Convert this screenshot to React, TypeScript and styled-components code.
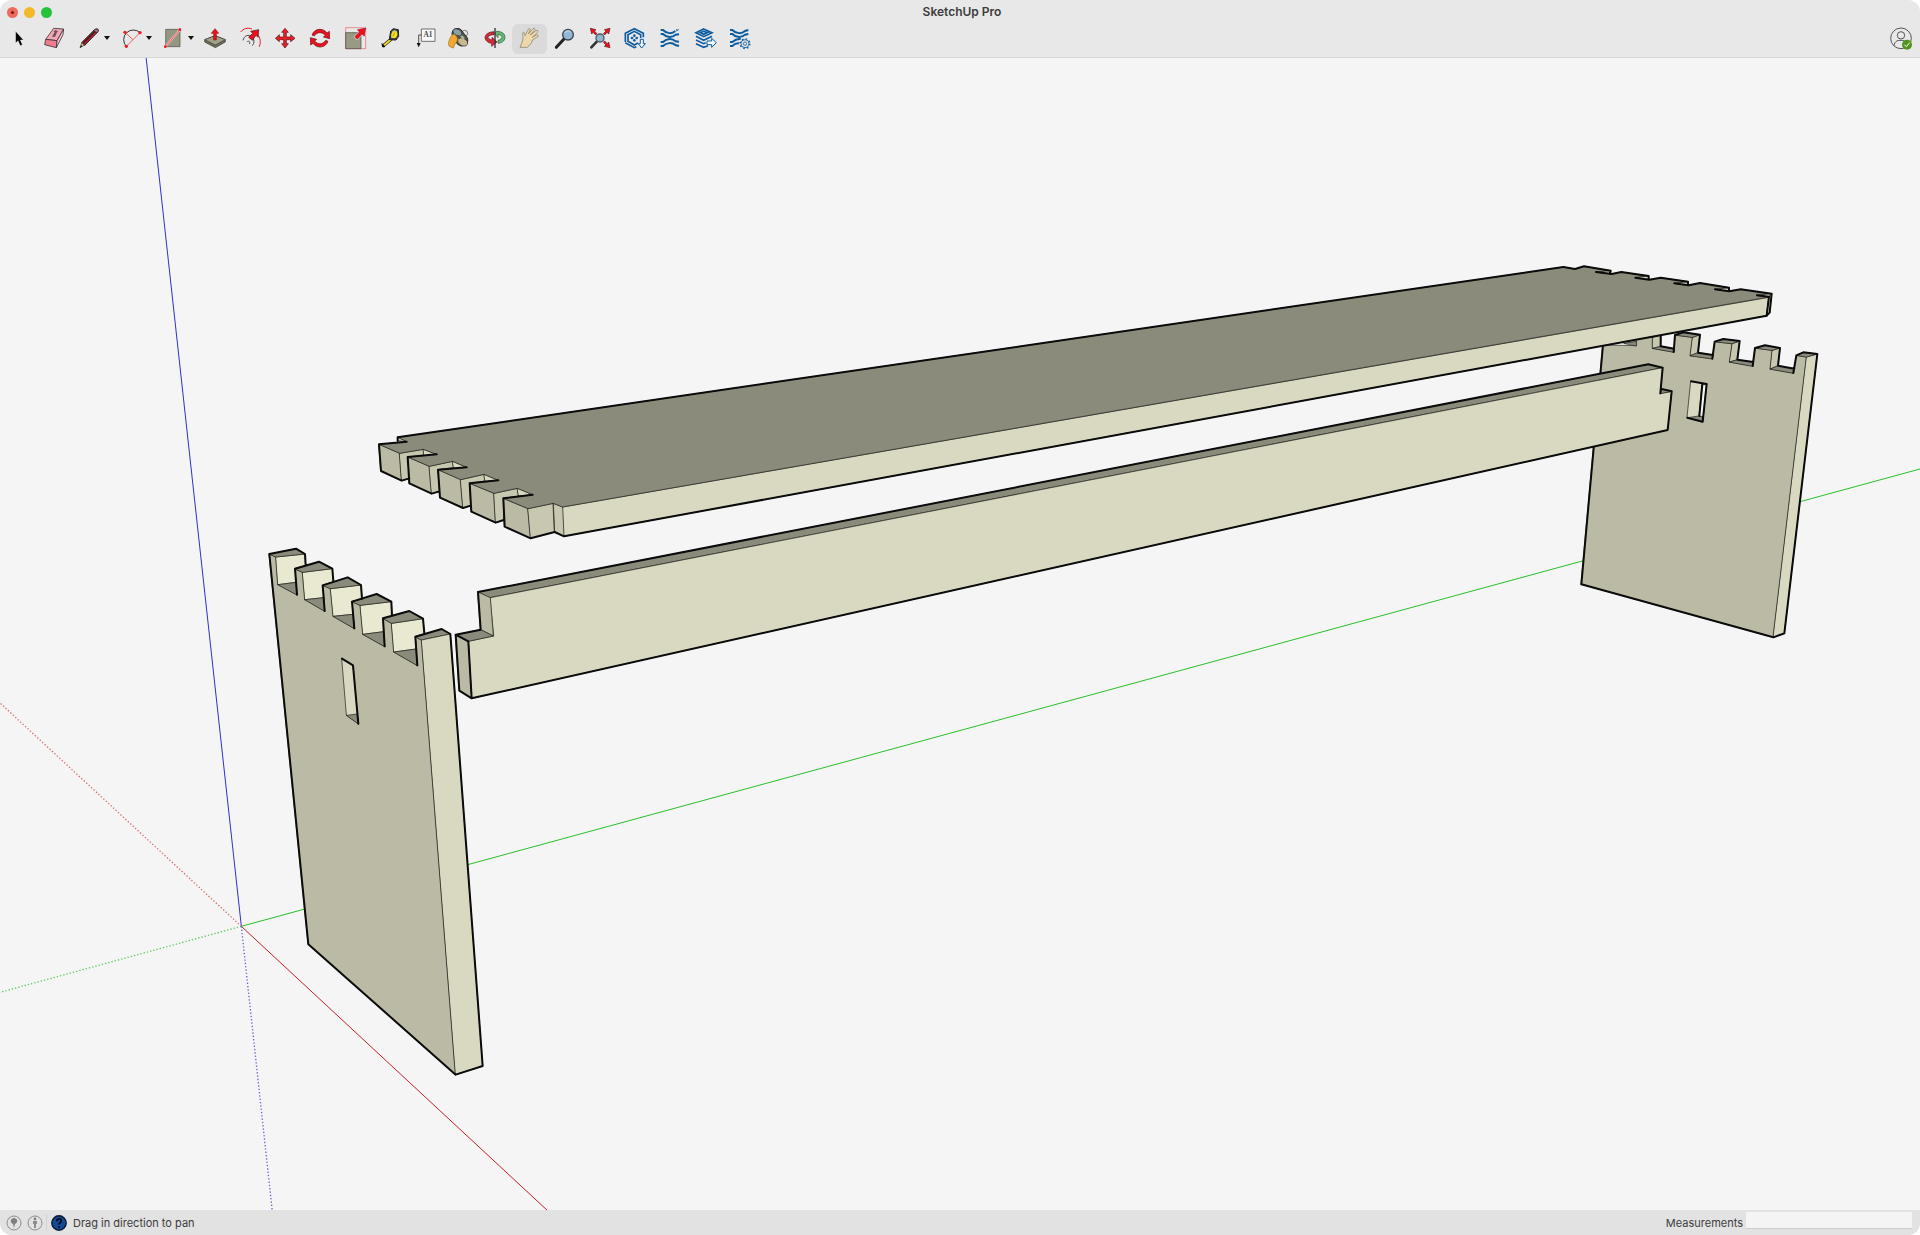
import React from "react";
import styled, { createGlobalStyle } from "styled-components";

const GlobalStyle = createGlobalStyle`
  * { box-sizing: border-box; }
  html, body { margin: 0; background: #ffffff; }
  body { font-family: Inter, "Liberation Sans", sans-serif; color: #3c3c3c; }
`;

const Window = styled.div`
  display: flex;
  flex-direction: column;
  height: 100vh;
  border-radius: 12px;
  overflow: hidden;
  background: #f5f5f5;
`;

const Header = styled.header`
  background: #e8e8e8;
  border-bottom: 1px solid #d6d6d6;
`;

const TitleBar = styled.div`
  display: grid;
  grid-template-columns: 1fr auto 1fr;
  align-items: center;
  height: 24px;
  padding: 0 3px 0 7px;
`;

const Title = styled.h1`
  margin: 0;
  font-size: 12px;
  line-height: 16px;
  font-weight: 600;
`;

const WindowControls = styled.div`
  display: flex;
  gap: 6px;
`;

const WindowButton = styled.button<{ $color: string }>`
  display: grid;
  place-items: center;
  width: 11px;
  height: 11px;
  padding: 0;
  border: 0;
  border-radius: 50%;
  background: ${(p) => p.$color};
`;

const EditedDot = styled.span`
  width: 3px;
  height: 3px;
  border-radius: 50%;
  background: #7c1512;
`;

const ToolBar = styled.div`
  display: flex;
  align-items: flex-start;
  height: 33px;
  padding: 0 7px 0 1px;
`;

const ToolButton = styled.button<{ $active?: boolean }>`
  display: grid;
  place-items: center;
  width: 35px;
  height: 30px;
  padding: 0 0 2px;
  border: 0;
  border-radius: 6px;
  background: ${(p) => (p.$active ? "#dadada" : "transparent")};
`;

const SplitTool = styled.div`
  display: flex;
  padding-left: 4px;
`;

const SplitButton = styled(ToolButton)`
  width: 26px;
`;

const CaretButton = styled(ToolButton)`
  width: 12px;
`;

const AccountButton = styled(ToolButton)`
  width: 24px;
  margin-left: auto;
`;

const Icon = styled.svg<{ $size?: number }>`
  display: block;
  width: ${(p) => p.$size ?? 24}px;
  height: ${(p) => p.$size ?? 24}px;
`;

const Caret = styled.svg`
  display: block;
  width: 6px;
  height: 4px;
`;

const Canvas = styled.main`
  flex: 1;
  min-height: 0;
`;

const Scene = styled.svg`
  display: block;
  width: 100%;
  height: 100%;
  stroke-linejoin: round;
  stroke-linecap: round;

  .top { fill: #8a8b7b; }
  .front { fill: #bbbba5; }
  .mid { fill: #c8c8b0; }
  .side { fill: #d9d9c1; }
  .lit { fill: #e9e9d1; }
  .gap { fill: #f5f5f5; }
  .face { stroke: #1c1c18; stroke-width: 2; }
  .edge { fill: none; stroke: #0b0b0b; stroke-width: 6; }
  .axis { fill: none; stroke-width: 3; }
  .dots { fill: none; stroke-width: 4; stroke-linecap: butt; stroke-dasharray: 4 6; }
`;

const StatusBar = styled.footer`
  display: flex;
  align-items: center;
  height: 25px;
  padding: 0 8px 0 6px;
  background: #e2e2e2;
  font-size: 11px;
  line-height: 16px;
`;

const StatusIcons = styled.div`
  display: flex;
  gap: 5px;
  margin-right: 3px;
`;

const StatusButton = styled.button`
  padding: 0;
  border: 0;
  background: transparent;
`;

const Divider = styled.span`
  width: 1px;
  height: 17px;
  margin-right: 4px;
  background: #d2d2d2;
`;

const Hint = styled.span`
  margin-left: 6px;
`;

const Measurements = styled.label`
  display: flex;
  align-items: center;
  gap: 3px;
  height: 25px;
  margin-left: auto;
`;

const MeasureInput = styled.input`
  align-self: flex-start;
  width: 166px;
  height: 17px;
  margin-top: 2px;
  padding: 0 4px;
  border: 0;
  border-bottom: 1px solid #cccccc;
  background: #f4f4f4;
  font: inherit;
`;

const BLUE = "#0d5c9e";
const RED = "#f0101c";

const ArrowIcon = () => (
  <Icon viewBox="0 0 72 72"><path d="M26 16V51L33 44 40 59 46 56 40 42H49Z" fill="#000" stroke="#fff" strokeWidth="1" /></Icon>
);
const EraserIcon = () => (
  <Icon viewBox="0 0 72 72">
    <g stroke="#333" strokeWidth="2.4" strokeLinejoin="round">
      <path d="M35 7 65 9 45 44 11 40Z" fill="#f4a6b5" />
      <path d="M11 40 45 44 43 65 8 56Z" fill="#ee7d90" />
      <path d="M45 44 65 9 63 26 43 65Z" fill="#f7c3cc" />
    </g>
    <path d="M41 12 49 17 45 19 39 33 30 32 38 18 34 18Z" fill="#66555a" />
  </Icon>
);
const PencilIcon = () => (
  <Icon viewBox="0 0 72 72">
    <path d="M12 65 18 49 26 57Z" fill="#e3c998" stroke="#222" strokeWidth="2" />
    <path d="M18 49 55 12 64 19 26 58Z" fill="#c81d26" stroke="#1a1a1a" strokeWidth="3" />
    <path d="M23 50 58 15" stroke="#222" strokeWidth="4" />
    <path d="M53 14C57 9 62 7 66 10S66 17 62 21Z" fill="#b66a72" stroke="#222" strokeWidth="3" />
    <path d="M12 65 15 58 19 61Z" fill="#111" />
  </Icon>
);
const ArcIcon = () => (
  <Icon viewBox="0 0 72 72">
    <path d="M25 61A29 29 0 0 1 66 20" fill="none" stroke="#333" strokeWidth="3" />
    <path d="M25 61 66 20M21 19 45 41" stroke="#f05a62" strokeWidth="3" />
    <g fill="#f01822"><circle cx="25" cy="61" r="5" /><circle cx="66" cy="20" r="5" /><circle cx="21" cy="19" r="5" /></g>
  </Icon>
);
const RectangleIcon = () => (
  <Icon viewBox="0 0 72 72">
    <path d="M17 10H60V62H17Z" fill="#969780" stroke="#4b4b42" strokeWidth="2" />
    <path d="M16 62 60 11" stroke="#f7c9c9" strokeWidth="6" /><path d="M16 62 60 11" stroke="#f3545e" strokeWidth="3" />
    <circle cx="16" cy="62" r="4" fill={RED} /><circle cx="60" cy="11" r="4" fill={RED} />
  </Icon>
);
const PushPullIcon = () => (
  <Icon viewBox="0 0 72 72">
    <path d="M5 41 36 29 67 41V48L37 65 5 48Z" fill="#6c6d5c" stroke="#3c3c34" strokeWidth="2" />
    <path d="M5 41 36 29 67 41 37 57Z" fill="#a0a189" stroke="#3c3c34" strokeWidth="2" />
    <path d="M36 8 47 22H40V42H32V22H25Z" fill={RED} stroke="#8d1519" strokeWidth="2" />
  </Icon>
);
const OffsetIcon = () => (
  <Icon viewBox="0 0 72 72">
    <path d="M8 18C17 7 29 4 42 9M51 18C66 29 70 45 64 62" fill="none" stroke={RED} strokeWidth="3" />
    <path d="M15 43C18 29 32 23 42 33 49 40 50 50 43 59M27 48C32 42 38 48 34 54" fill="none" stroke="#444" strokeWidth="3" />
    <path d="M32 34 44 22 38 16 62 11 60 34 54 28 43 43Z" fill={RED} stroke="#3b1414" strokeWidth="2" />
  </Icon>
);
const MoveIcon = () => (
  <Icon viewBox="0 0 72 72">
    <path d="M36 7 46 19H40V33H53V26L66 37 53 47V41H40V53H46L36 66 26 53H32V41H19V47L7 37 19 26V33H32V19H26Z" fill="#ee1c25" stroke="#4d1416" strokeWidth="2" />
  </Icon>
);
const RotateIcon = () => (
  <Icon viewBox="0 0 72 72">
    <g fill={RED} stroke="#5e1518" strokeWidth="2">
      <path d="M12 27C19 7 45 4 57 21L64 16 65 38 46 33 52 28C43 17 27 17 19 30Z" />
      <path d="M60 46C53 66 27 69 15 52L8 57 7 35 26 40 20 45C29 56 45 56 53 43Z" />
    </g>
  </Icon>
);
const ScaleIcon = () => (
  <Icon viewBox="0 0 72 72">
    <path d="M8 5H68V68H8Z" fill="none" stroke="#ee5960" strokeWidth="2" />
    <path d="M8 20H54V68H8Z" fill="#999a84" stroke="#44443c" strokeWidth="2" />
    <path d="M35 32 49 18 43 11 69 5 64 31 57 25 43 40Z" fill={RED} stroke="#fff" strokeWidth="4" /><path d="M35 32 49 18 43 11 69 5 64 31 57 25 43 40Z" fill={RED} stroke="#70191c" strokeWidth="1.5" />
  </Icon>
);
const TapeIcon = () => (
  <Icon viewBox="0 0 72 72">
    <path d="M40 39 15 60" stroke="#222" strokeWidth="10" /><path d="M40 39 18 58" stroke="#f2dc20" strokeWidth="6" />
    <path d="M12 53 20 62 14 63Z" fill="#111" stroke="#111" strokeWidth="3" />
    <path d="M38 15 46 8 61 11 62 31 54 42 34 41Z" fill="#3a3a3a" stroke="#222" strokeWidth="3" strokeLinejoin="round" />
    <path d="M42 16 49 12 57 15 57 29 50 36 39 36Z" fill="#aaa" />
    <ellipse cx="49" cy="26" rx="9" ry="11" fill="#f3df19" transform="rotate(20 49 26)" />
    <path d="m50 20-5 11" stroke="#8c861c" strokeWidth="2" />
  </Icon>
);
const TextIcon = () => (
  <Icon viewBox="0 0 72 72">
    <path d="M25 9H66V46H25Z" fill="#f8f8f8" stroke="#555" strokeWidth="2.5" />
    <path d="M25 27H17V54" fill="none" stroke="#333" strokeWidth="2.5" /><path d="M11 51H23L17 64Z" fill="#111" />
    <text x="45" y="34" textAnchor="middle" fontFamily="Liberation Serif, serif" fontSize="22" fontWeight="700" fill="#444">A1</text>
  </Icon>
);
const PaintIcon = () => (
  <Icon viewBox="0 0 72 72">
    <circle cx="50" cy="22" r="9" fill="none" stroke="#777" strokeWidth="3" />
    <path d="M12 24C12 8 28 4 38 10L58 36C63 49 54 59 40 60 25 57 15 39 12 24Z" fill="#555648" stroke="#292a25" strokeWidth="3" />
    <ellipse cx="28" cy="19" rx="14" ry="9" fill="#8aa2a7" stroke="#333" strokeWidth="2" transform="rotate(25 28 19)" />
    <ellipse cx="44" cy="48" rx="16" ry="11" fill="#c7b98d" stroke="#333" strokeWidth="2" transform="rotate(28 44 48)" />
    <path d="M19 24C28 31 32 41 24 50 20 55 18 59 17 66 9 65 2 60 1 56 3 40 8 27 19 24Z" fill="#f3a72d" stroke="#9e722c" strokeWidth="2" />
    <path d="m39 30 9 8" stroke="#b3b5a2" strokeWidth="7" />
  </Icon>
);
const OrbitIcon = () => (
  <Icon viewBox="0 0 72 72">
    <path d="M33 17C15 18 6 25 6 36 8 46 17 51 26 52V61L42 48 27 34V42C19 40 15 37 15 32 19 28 25 26 33 26Z" fill="#d62a36" stroke="#561b1e" strokeWidth="2" />
    <path d="M40 16C58 16 66 24 66 34 65 47 55 51 45 52V43C53 41 57 38 57 32 54 28 48 25 45 25V35L34 22 40 17Z" fill="#64b875" stroke="#285a32" strokeWidth="2" />
    <path d="M36 6V66" stroke="#333" strokeWidth="4" />
  </Icon>
);
const HandIcon = () => (
  <Icon viewBox="0 0 72 72">
    <path d="M6 64C10 54 14 47 15 37L14 21C17 16 20 19 21 29L31 10C35 6 39 8 36 14L31 24 45 8C50 5 53 8 49 13L37 27 54 14C60 11 62 16 58 20L43 34 55 27C62 25 63 30 57 34L43 42C42 52 35 57 28 64Z" fill="#ecd8ab" stroke="#807962" strokeWidth="2" strokeLinejoin="round" />
  </Icon>
);
const ZoomIcon = () => (
  <Icon viewBox="0 0 72 72">
    <path d="M10 64 33 39" stroke="#222" strokeWidth="9" strokeLinecap="round" />
    <circle cx="45" cy="26" r="16" fill="#93b7d6" stroke="#39434c" strokeWidth="4" /><path d="M36 21C41 12 50 14 53 19" fill="none" stroke="#bbd2e5" strokeWidth="4" />
  </Icon>
);
const ZoomExtentsIcon = () => (
  <Icon viewBox="0 0 72 72">
    <path d="M10 64 27 46" stroke="#333" strokeWidth="8" strokeLinecap="round" />
    <g fill={RED} stroke="#611317" strokeWidth="2"><path d="M7 7 24 11 19 15 27 23 23 27 15 19 11 24Z" /><path d="M66 7 49 11 54 15 46 23 50 27 58 19 62 24Z" /><path d="M66 65 49 61 54 57 46 49 50 45 58 53 62 48Z" /></g>
    <circle cx="36" cy="36" r="12" fill="#93b5d0" stroke="#4f5b62" strokeWidth="4" />
  </Icon>
);
const WarehouseIcon = () => (
  <Icon viewBox="0 0 72 72" fill="none" stroke={BLUE} strokeWidth="5">
    <path d="M7 48V22L34 8 61 22V34M7 50 34 65 40 62" />
    <path d="M45 51 34 57 15 46V26L34 16 53 26V36" />
    <g fill={BLUE} stroke="none"><circle cx="34" cy="29" r="4" /><circle cx="27" cy="36" r="4" /><circle cx="41" cy="36" r="4" /><circle cx="34" cy="43" r="4" /></g>
    <path d="M52 40H61V53H67L56 66 46 53H52Z" fill="#f4f8fb" strokeWidth="3" />
  </Icon>
);
const ExtensionIcon = () => (
  <Icon viewBox="0 0 72 72" fill="none" stroke={BLUE} strokeWidth="6">
    <path d="M8 12H15C26 24 43 24 52 15M8 24H15C27 36 43 36 53 26L63 25M8 48H15C27 36 43 36 53 46L63 47M8 60H15C26 49 43 49 52 57L63 60" />
    <path d="M55 13 63 11" strokeDasharray="4 3" />
  </Icon>
);
const ShareIcon = () => (
  <Icon viewBox="0 0 72 72" fill="none" stroke={BLUE} strokeWidth="5">
    <path d="M32 9 57 20 32 32 9 20ZM22 20 32 16 43 20 32 25Z" />
    <path d="M9 31 32 43 57 31M9 42 32 53 38 50M9 53 32 64 45 59" />
    <path d="M42 45H56V37L70 50 56 64V56H42Z" fill="#f4f8fb" strokeWidth="3" />
  </Icon>
);
const ManagerIcon = () => (
  <Icon viewBox="0 0 72 72" fill="none" stroke={BLUE} strokeWidth="6">
    <path d="M6 12H13C24 24 41 24 51 15L61 12M6 24H13C25 36 41 36 51 26L61 24M6 48H13C22 40 31 38 38 39M6 60H13C20 53 27 51 34 52" />
    <circle cx="51" cy="53" r="16" fill="#e8e8e8" stroke="none" />
    <circle cx="51" cy="53" r="12" strokeWidth="2.5" /><circle cx="51" cy="53" r="14.5" strokeWidth="4" strokeDasharray="5 6.4" /><circle cx="51" cy="53" r="5" strokeWidth="2.5" />
  </Icon>
);
const AccountIcon = () => (
  <Icon viewBox="0 0 72 72" fill="none" stroke="#555" strokeWidth="3">
    <circle cx="36" cy="37" r="31" /><circle cx="36" cy="28" r="11" /><path d="M15 59C18 43 28 43 36 43S48 45 52 50" />
    <circle cx="54" cy="56" r="15" fill="#559321" stroke="none" /><path d="m46 56 6 6 10-12" stroke="#fff" />
  </Icon>
);

const DropCaret = () => (
  <Caret viewBox="0 0 6 4"><path d="M0 0H6L3 4Z" fill="#111" /></Caret>
);

type Tool = { name: string; icon: React.FC; menu?: boolean; active?: boolean };

const tools: Tool[] = [
  { name: "Select", icon: ArrowIcon },
  { name: "Eraser", icon: EraserIcon },
  { name: "Line", icon: PencilIcon, menu: true },
  { name: "Arc", icon: ArcIcon, menu: true },
  { name: "Rectangle", icon: RectangleIcon, menu: true },
  { name: "Push/Pull", icon: PushPullIcon },
  { name: "Offset", icon: OffsetIcon },
  { name: "Move", icon: MoveIcon },
  { name: "Rotate", icon: RotateIcon },
  { name: "Scale", icon: ScaleIcon },
  { name: "Tape Measure", icon: TapeIcon },
  { name: "Text", icon: TextIcon },
  { name: "Paint Bucket", icon: PaintIcon },
  { name: "Orbit", icon: OrbitIcon },
  { name: "Pan", icon: HandIcon, active: true },
  { name: "Zoom", icon: ZoomIcon },
  { name: "Zoom Extents", icon: ZoomExtentsIcon },
  { name: "3D Warehouse", icon: WarehouseIcon },
  { name: "Extension Warehouse", icon: ExtensionIcon },
  { name: "Share Model", icon: ShareIcon },
  { name: "Extension Manager", icon: ManagerIcon },
];

const ToolItem = ({ name, icon: Glyph, menu, active }: Tool) =>
  menu ? (
    <SplitTool>
      <SplitButton aria-label={name}><Glyph /></SplitButton>
      <CaretButton aria-label={`${name} options`}><DropCaret /></CaretButton>
    </SplitTool>
  ) : (
    <ToolButton aria-label={name} aria-pressed={active} $active={active}><Glyph /></ToolButton>
  );

const Axes = () => (
  <g>
    <path className="axis" d="M724 2779 438 170" stroke="#2f2fcc" />
    <path className="axis" d="M724 2779 5760 1407" stroke="#2abf2a" />
    <path className="axis" d="M724 2779 1645 3634" stroke="#c4202a" />
    <path className="dots" d="M724 2779 0 2109" stroke="#d96a6a" />
    <path className="dots" d="M724 2779 0 2977" stroke="#5ccc5c" />
    <path className="dots" d="M724 2779 817 3634" stroke="#6464d6" />
  </g>
);

const RightLeg = () => (
  <g transform="translate(4620 750)">
    <path className="front face" d="M189 285 289 287V262H338V295L402 306 405 255 458 262 451 317 517 326 524 275 577 281 569 336 638 348 645 294 697 301 691 357 760 369 769 316 800 321 700 1162 124 1003Z" />
    <path className="side face" d="M800 321 832 312 733 1150 700 1162Z" />
    <path className="mid face" d="M338 262 364 255 362 289 338 295ZM458 262 480 254 474 308 451 317ZM577 281 599 273 592 329 569 336ZM697 301 720 294 714 347 691 357Z" />
    <path className="top face" d="M252 280 289 274V287ZM338 295 362 289 402 296V306ZM451 317 474 308 519 315 517 326ZM569 336 592 329 640 336 638 348ZM691 357 714 347 763 356 760 369Z" />
    <path className="top face" d="M405 255 430 247 480 254 458 262ZM524 275 550 267 599 273 577 281ZM645 294 675 286 720 294 697 301ZM769 316 790 307 832 312 800 321Z" />
    <path className="side face" d="M453 394 500 402 488 515 442 503Z" />
    <path className="gap face" d="M487 403 499 405 490 500 478 498Z" />
    <path className="top face" d="M442 503 476 498 490 502 488 515Z" />
    <path className="edge" d="M453 394 500 402 488 515 442 503M487 403 478 498" />
    <path className="edge" d="M189 285 124 1003 700 1162 733 1150 832 312 790 307 769 316 760 369M763 356 714 347 720 294 675 286 645 294 638 348M640 336 592 329 599 273 550 267 524 275 517 326M519 315 474 308 480 254 430 247 405 255 401 306M402 296 362 289V260" />
  </g>
);

const Beam = () => (
  <g transform="translate(750 1605)">
    <path className="top face" d="M684 171 4195 -512 4238 -502 721 188Z" />
    <path className="side face" d="M721 188 4238 -502 4231 -425 4265 -431 4253 -315 665 490 655 319 730 303Z" />
    <path className="front face" d="M617 299 655 319 665 490 628 467ZM684 171 721 188 730 303 692 284Z" />
    <path className="top face" d="M617 299 692 284 730 303 655 319ZM4231 -425 4235 -438 4265 -431Z" />
    <path className="edge" d="M617 299 692 284 684 171 4195 -512 4238 -502 4231 -425M4235 -438 4265 -431 4253 -315 665 490 628 467 617 299 655 319 665 490" />
  </g>
);

const SeatRightEnd = () => (
  <g transform="translate(4620 750)">
    <path className="side face" d="M168 66 212 62V70ZM286 83 326 78V88ZM403 100 444 95V105ZM525 118 567 113V123ZM651 136 692 131 687 141Z" />
    <path className="edge" d="M70 51 105 57 132 49 212 62 210 70M168 66 215 72 244 66 326 78V87M286 83 328 89 362 83 444 95V104M403 100 446 106 480 99 567 113V122M525 118 568 124 602 118 695 131 689 188 680 197M651 136 687 140 680 197" />
  </g>
);

const Seat = () => (
  <>
    <g transform="translate(1080 1260)">
      <path className="side face" d="M608 261 4227 -368 4220 -313 612 349Z" />
      <path className="side face" d="M4227 -371 4235 -379 4229 -322 4220 -313Z" />
      <path className="front face" d="M57 73 119 100 125 182 63 153ZM143 111 208 139 215 221 148 190ZM234 149 302 179 309 264 240 233ZM329 190 402 220 407 308 334 275ZM430 235 504 266 512 355 434 320Z" />
      <path className="mid face" d="M119 100 190 88 192 107 143 111 148 175 125 182ZM208 139 278 124 281 143 234 149 238 214 215 221ZM302 179 372 163 376 183 329 190 332 257 309 264ZM402 220 472 205 476 228 430 235 431 300 407 308ZM504 266 580 250 584 336 512 355ZM580 250 608 261 612 349 584 336Z" />
      <path className="side face" d="M190 88 230 103 192 107ZM278 124 320 142 281 145ZM372 163 415 181 376 184ZM472 205 518 224 476 228ZM113 52V62L140 65Z" />
      <path className="top face" d="M113 52 3610 -459 3645 -453 3672 -461 3752 -448 3708 -444 3755 -438 3784 -444 3866 -432 3826 -427 3868 -421 3902 -427 3984 -415 3943 -410 3986 -404 4020 -411 4107 -397 4065 -392 4108 -386 4142 -392 4232 -379 4191 -374 4227 -369 608 261 580 250 504 266 430 235 518 224 472 205 402 220 329 190 415 181 372 163 302 179 234 149 320 142 278 124 208 139 143 111 230 103 190 88 119 100 57 73 140 65Z" />
      <path className="edge" d="M3610 -459 113 52V62M140 65 57 73 63 153 125 182 148 175M230 103 143 111 148 190 215 221 238 214M320 142 234 149 240 233 309 264 332 257M415 181 329 190 334 275 407 308 431 300M518 224 430 235 434 320 512 355 584 336 612 349 4220 -313" />
    </g>
    <SeatRightEnd />
  </>
);

const LeftLeg = () => (
  <g transform="translate(750 1605)">
    <path className="front face" d="M58 57 78 66 84 149 141 179 135 102 158 112 165 194 224 228 218 151 242 161 250 244 313 280 306 200 331 211 339 298 404 334 399 250 425 265 432 351 502 391 496 305 515 315 617 1619 175 1228Z" />
    <path className="lit face" d="M78 66 165 57 167 92 135 100 138 142 84 149ZM158 112 247 101 250 140 218 150 222 188 165 194ZM242 161 333 150 336 192 306 199 309 238 250 244ZM331 211 424 200 426 243 399 250 401 290 339 298ZM425 265 519 251 523 296 496 304 498 342 432 351Z" />
    <path className="top face" d="M84 149 138 142 141 179ZM165 194 222 188 224 228ZM250 244 309 238 313 280ZM339 298 401 290 404 334ZM432 351 498 342 502 391Z" />
    <path className="top face" d="M58 57 138 41 165 57 78 66ZM135 101 207 80 247 101 158 112ZM218 151 293 127 333 150 242 161ZM306 200 380 177 424 200 331 211ZM399 250 478 228 519 251 425 265ZM496 305 575 282 601 297 515 315Z" />
    <path className="side face" d="M515 315 601 297 698 1593 617 1619ZM276 371 309 391 325 566 290 541Z" />
    <path className="top face" d="M290 541 322 537 325 566Z" />
    <path className="edge" d="M276 371 309 391 325 566M141 179 135 101 207 80 247 101 250 138M224 228 218 151 293 127 333 150 336 192M313 280 306 200 380 177 424 200 426 242M404 334 399 250 478 228 519 251 523 295M502 391 496 305 575 282 601 297 698 1593 617 1619 175 1228 58 57 138 41 165 57 167 91" />
  </g>
);

export default function App() {
  return (
    <>
      <GlobalStyle />
      <Window>
        <Header>
          <TitleBar>
            <WindowControls>
              <WindowButton aria-label="Close" $color="#ed6a5e"><EditedDot /></WindowButton>
              <WindowButton aria-label="Minimize" $color="#f5b829" />
              <WindowButton aria-label="Zoom window" $color="#27c23c" />
            </WindowControls>
            <Title>SketchUp Pro</Title>
          </TitleBar>
          <ToolBar role="toolbar" aria-label="Tools">
            {tools.map((tool) => <ToolItem key={tool.name} {...tool} />)}
            <AccountButton aria-label="Account"><AccountIcon /></AccountButton>
          </ToolBar>
        </Header>
        <Canvas>
          <Scene viewBox="0 174 5760 3456" preserveAspectRatio="xMidYMid slice" role="img" aria-label="Bench model">
            <Axes />
            <RightLeg />
            <Beam />
            <Seat />
            <LeftLeg />
          </Scene>
        </Canvas>
        <StatusBar>
          <StatusIcons>
            <StatusButton aria-label="Geo-location">
              <Icon $size={16} viewBox="0 0 16 16"><circle cx="8" cy="8" r="7" fill="none" stroke="#8c8c8c" /><path d="M8 13 7 9C3 7 5 3 8 3S13 7 9 9Z" fill="#808080" /></Icon>
            </StatusButton>
            <StatusButton aria-label="Credits">
              <Icon $size={16} viewBox="0 0 16 16"><circle cx="8" cy="8" r="7" fill="none" stroke="#8c8c8c" /><circle cx="8" cy="4" r="1.4" fill="#808080" /><path d="M6 6H10V9H9V13H7V9H6Z" fill="#8c8c8c" /></Icon>
            </StatusButton>
          </StatusIcons>
          <Divider />
          <StatusButton aria-label="Help">
            <Icon $size={16} viewBox="0 0 16 16"><circle cx="8" cy="8" r="7.2" fill="#114a98" stroke="#0a1830" strokeWidth="1.4" /><path d="M5.8 6.2C5.8 3 10.4 3.4 10.2 6 10.2 7.8 8 7.6 8 9.6" fill="none" stroke="#050b18" strokeWidth="1.9" /><circle cx="8" cy="12" r="1.1" fill="#050b18" /></Icon>
          </StatusButton>
          <Hint>Drag in direction to pan</Hint>
          <Measurements>
            Measurements
            <MeasureInput type="text" />
          </Measurements>
        </StatusBar>
      </Window>
    </>
  );
}
